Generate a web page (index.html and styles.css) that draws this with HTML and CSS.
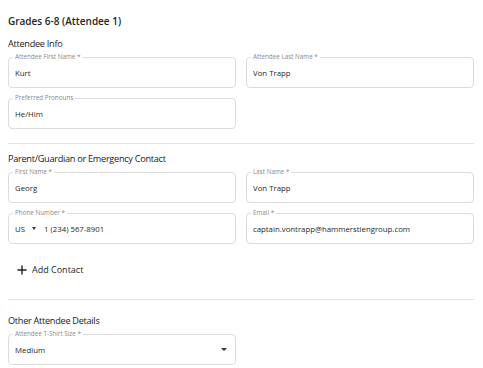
FILE: index.html
```html
<!DOCTYPE html>
<html lang="en">

<head>
  <title>Attendee Registration</title>
  <link rel="stylesheet" href="styles.css">
</head>

<body>
  <div class="form">
    <h1>Grades 6-8 (Attendee 1)</h1>

    <h2>Attendee Info</h2>
    <div class="grid">
      <div class="field"><span class="label">Attendee First Name *</span><span class="value">Kurt</span></div>
      <div class="field"><span class="label">Attendee Last Name *</span><span class="value">Von Trapp</span></div>
      <div class="field"><span class="label">Preferred Pronouns</span><span class="value">He/Him</span></div>
    </div>

    <hr class="divider first">

    <h2>Parent/Guardian or Emergency Contact</h2>
    <div class="grid">
      <div class="field"><span class="label">First Name *</span><span class="value">Georg</span></div>
      <div class="field"><span class="label">Last Name *</span><span class="value">Von Trapp</span></div>
      <div class="field">
        <span class="label">Phone Number *</span>
        <span class="value">US</span>
        <span class="caret small"></span>
        <span class="value phone">1 (234) 567-8901</span>
      </div>
      <div class="field"><span class="label">Email *</span><span class="value">captain.vontrapp@hammerstiengroup.com</span></div>
    </div>

    <button class="add-contact">
      <svg width="10" height="10" viewBox="0 0 10 10"><path d="M5 0.5v9M0.5 5h9" stroke="#1f1f1f" stroke-width="1.4" fill="none"/></svg>
      Add Contact
    </button>

    <hr class="divider second">

    <h2>Other Attendee Details</h2>
    <div class="grid">
      <div class="field select"><span class="label">Attendee T-Shirt Size *</span><span class="value">Medium</span><span class="caret"></span></div>
    </div>
  </div>
</body>

</html>
```

FILE: styles.css
```css
body {
  margin: 0;
  font-family: 'Open Sans', 'Noto Sans', Arial, sans-serif;
  color: #1f1f1f;
  background: #fff;
}

.form {
  padding: 13px 9px 0 8px;
}

h1 {
  margin: 0 0 8px;
  font-size: 10px;
  line-height: 16px;
  font-weight: 600;
}

h2 {
  margin: 0 0 6px;
  font-size: 9.2px;
  line-height: 14px;
  font-weight: 500;
  letter-spacing: -0.3px;
  color: #1a1a1a;
}

.grid {
  display: grid;
  grid-template-columns: 1fr 1fr;
  gap: 10px;
}

.field {
  position: relative;
  height: 31px;
  box-sizing: border-box;
  border: 1px solid #dcdcdc;
  border-radius: 4px;
  display: flex;
  align-items: center;
  padding: 0 6px;
}

.label {
  position: absolute;
  top: -5px;
  left: 4px;
  padding: 0 2px;
  background: #fff;
  font-size: 6.3px;
  line-height: 8px;
  color: #8a8a8a;
}

.value {
  font-size: 7.8px;
  font-weight: 500;
  white-space: nowrap;
}

.phone {
  margin-left: 8px;
}

.caret {
  width: 0;
  height: 0;
  border-left: 3px solid transparent;
  border-right: 3px solid transparent;
  border-top: 3px solid #333;
  margin-left: auto;
  margin-right: 2px;
}

.caret.small {
  margin-left: 7px;
  margin-right: 0;
  border-left-width: 2.5px;
  border-right-width: 2.5px;
  border-top-width: 3px;
}

.divider {
  border: 0;
  border-top: 1px solid #e4e4e4;
  margin: 0;
}

.divider.first {
  margin: 14px 0 8px;
}

.divider.second {
  margin: 22px 0 14px;
}

.add-contact {
  display: flex;
  align-items: center;
  gap: 5px;
  margin: 19px 0 0 9px;
  padding: 0;
  border: 0;
  background: none;
  font-family: inherit;
  font-size: 9px;
  line-height: 14px;
  font-weight: 500;
  color: #1f1f1f;
}
```
